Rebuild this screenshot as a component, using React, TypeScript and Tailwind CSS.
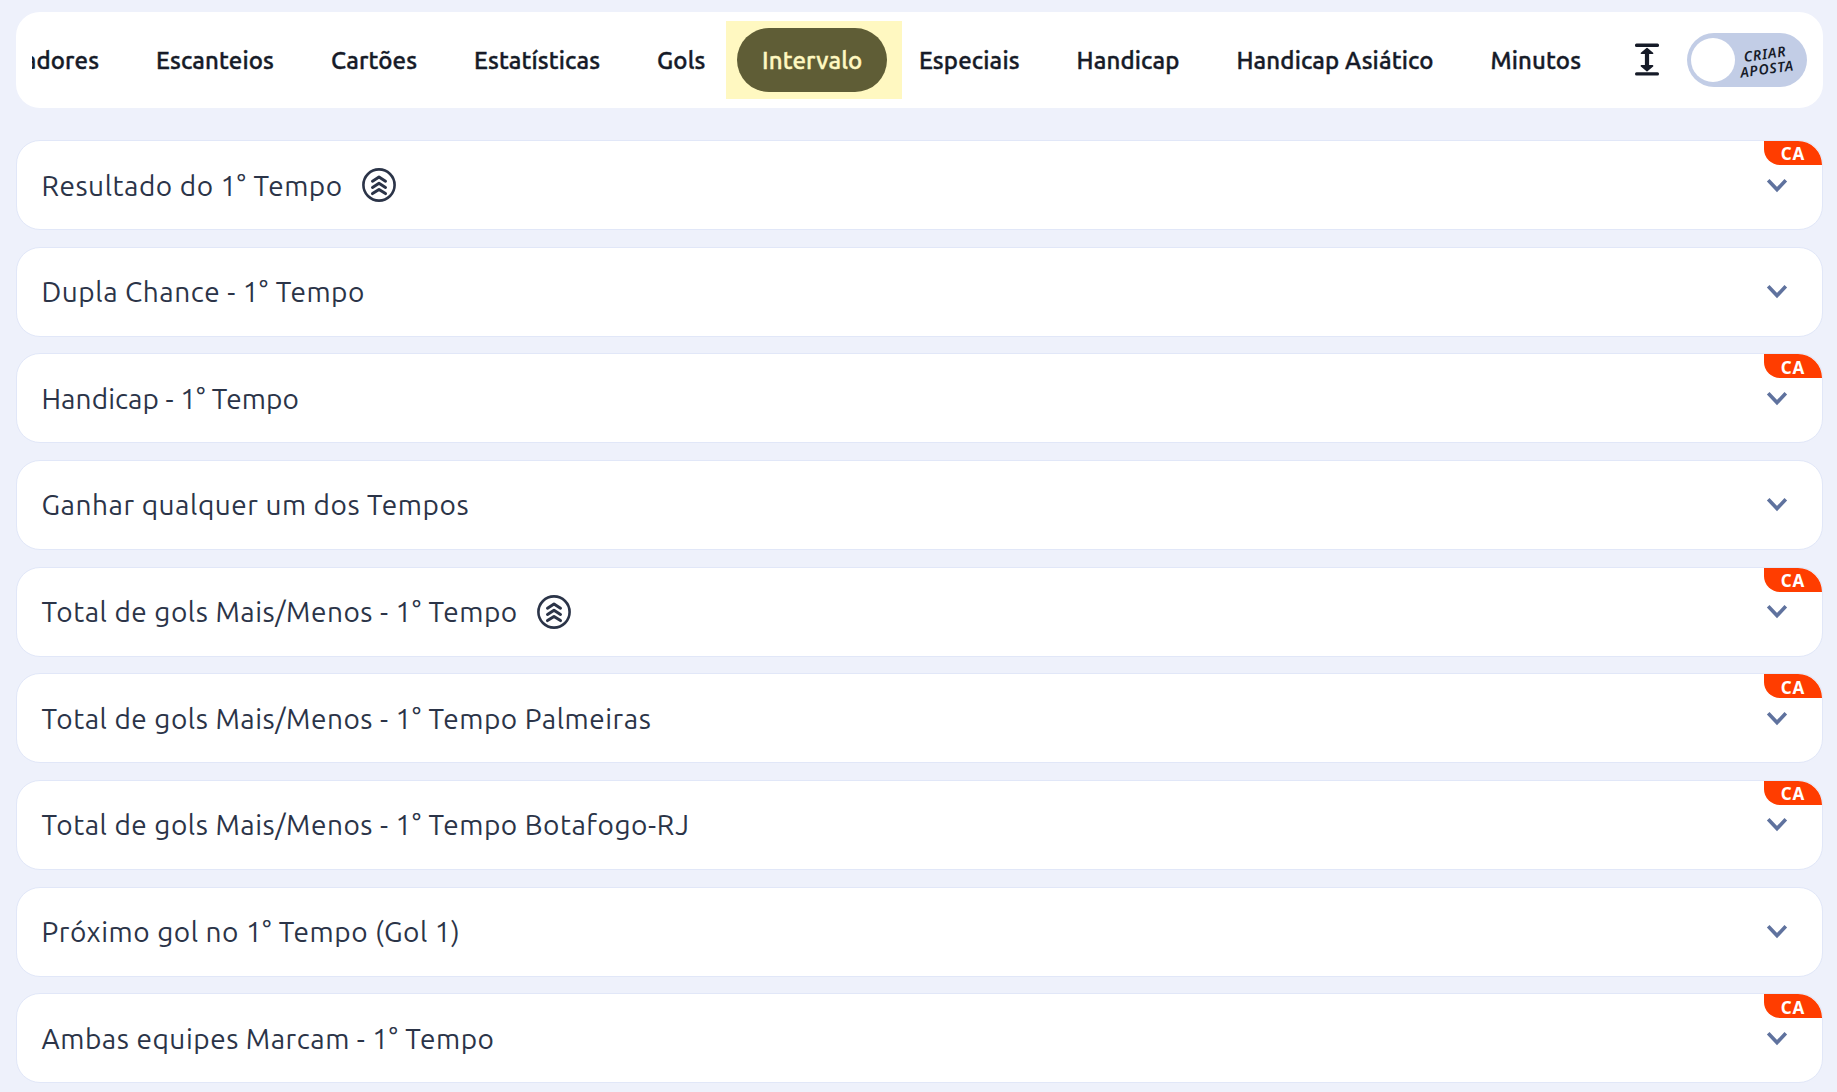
const tabs = [
  "Jogadores",
  "Escanteios",
  "Cartões",
  "Estatísticas",
  "Gols",
  "Intervalo",
  "Especiais",
  "Handicap",
  "Handicap Asiático",
  "Minutos",
];

const markets = [
  { title: "Resultado do 1° Tempo", boost: true, ca: true },
  { title: "Dupla Chance - 1° Tempo" },
  { title: "Handicap - 1° Tempo", ca: true, tight: true },
  { title: "Ganhar qualquer um dos Tempos" },
  { title: "Total de gols Mais/Menos - 1° Tempo", boost: true, ca: true },
  { title: "Total de gols Mais/Menos - 1° Tempo Palmeiras", ca: true },
  { title: "Total de gols Mais/Menos - 1° Tempo Botafogo-RJ", ca: true },
  { title: "Próximo gol no 1° Tempo (Gol 1)" },
  { title: "Ambas equipes Marcam - 1° Tempo", ca: true },
];

function BoostIcon() {
  return (
    <svg width="34" height="34" viewBox="0 0 34 34" fill="none" stroke="#2b3448">
      <circle cx="17" cy="17" r="15.6" strokeWidth="2.6" />
      <g strokeWidth="3" strokeLinecap="round" strokeLinejoin="round">
        <path d="M10.5 13.2 L17 9 L23.5 13.2" />
        <path d="M10.5 19.4 L17 15.2 L23.5 19.4" />
        <path d="M10.5 25.6 L17 21.4 L23.5 25.6" />
      </g>
    </svg>
  );
}

function ExpandIcon() {
  return (
    <svg width="24" height="34" viewBox="0 0 24 34" fill="#161b28">
      <rect x="0" y="0.6" width="24" height="3.4" rx="1.5" />
      <rect x="0" y="29.2" width="24" height="3.4" rx="1.5" />
      <path
        d="M12 5.5 L17.6 10.3 H6.4 Z M12 27.7 L17.6 22.9 H6.4 Z"
        stroke="#161b28"
        strokeWidth="1.6"
        strokeLinejoin="round"
      />
      <rect x="9.9" y="9" width="4.2" height="15" />
    </svg>
  );
}

function Chevron() {
  return (
    <svg width="22" height="16" viewBox="0 0 22 16" fill="none">
      <path d="M2.2 2.2 L11 11.6 L19.8 2.2" stroke="#5f729e" strokeWidth="3.6" />
    </svg>
  );
}

export default function App() {
  return (
    <div className="h-[1092px] w-[1837px] overflow-hidden bg-[#eef1fb] pt-3 pl-4 font-['Ubuntu','Noto_Sans',sans-serif]">
      {/* Tabs */}
      <nav className="flex h-24 w-[1807px] items-center rounded-3xl bg-white pl-4">
        <div className="flex h-full w-[1581px] items-center justify-end overflow-hidden text-[24px] font-medium tracking-[0.13px] [-webkit-text-stroke:0.4px]">
          {tabs.map((tab) =>
            tab === "Intervalo" ? (
              <div key={tab} className="-ml-[11px] mr-[-8px] flex h-[78px] shrink-0 items-center bg-[#fff8c1] pr-[15px] pl-[11px]">
                <button className="h-16 rounded-full bg-[#5f5d36] px-[24.5px] pt-0.5 text-[#fff8c1]">
                  {tab}
                </button>
              </div>
            ) : (
              <button key={tab} className="relative mr-[6.9px] h-16 shrink-0 px-[25px] pt-0.5 whitespace-nowrap text-[#161b28]">
                {tab}
              </button>
            )
          )}
        </div>
        <div className="ml-[22px] shrink-0">
          <ExpandIcon />
        </div>
        <button className="ml-7 flex h-[54px] w-[120px] shrink-0 items-center rounded-full bg-[#c2cde6] pl-1">
          <span className="h-11 w-11 shrink-0 rounded-full bg-white"></span>
          <span className="mt-0.5 ml-px w-[60px] -rotate-[8deg] text-center font-['Noto_Sans',sans-serif] text-[14px] leading-[14.5px] font-semibold tracking-[0.8px] text-[#161b28] italic">
            CRIAR
            <br />
            APOSTA
          </span>
        </button>
      </nav>

      {/* Markets */}
      <ul className="mt-8 flex w-[1807px] flex-col gap-[16.67px]">
        {markets.map((market) => (
          <li
            key={market.title}
            className="relative flex h-[90px] items-center rounded-3xl border border-[#e1e7f8] bg-white pr-[34px] pl-[24.5px]"
          >
            <h3
              className={`pt-px text-[28px] text-[#2b3448] ${market.tight ? "tracking-[0.1px]" : "tracking-[0.54px]"}`}
            >
              {market.title}
            </h3>
            {market.boost && (
              <span className="ml-[19px]">
                <BoostIcon />
              </span>
            )}
            <span className="mt-px ml-auto">
              <Chevron />
            </span>
            {market.ca && (
              <span className="absolute top-0 right-0 flex h-6 w-[58px] items-center justify-center rounded-tr-3xl rounded-bl-2xl bg-[#ff3d00] pt-0.5 font-['Noto_Sans',sans-serif] text-[17px] font-bold tracking-[0.8px] text-white">
                CA
              </span>
            )}
          </li>
        ))}
      </ul>
    </div>
  );
}
